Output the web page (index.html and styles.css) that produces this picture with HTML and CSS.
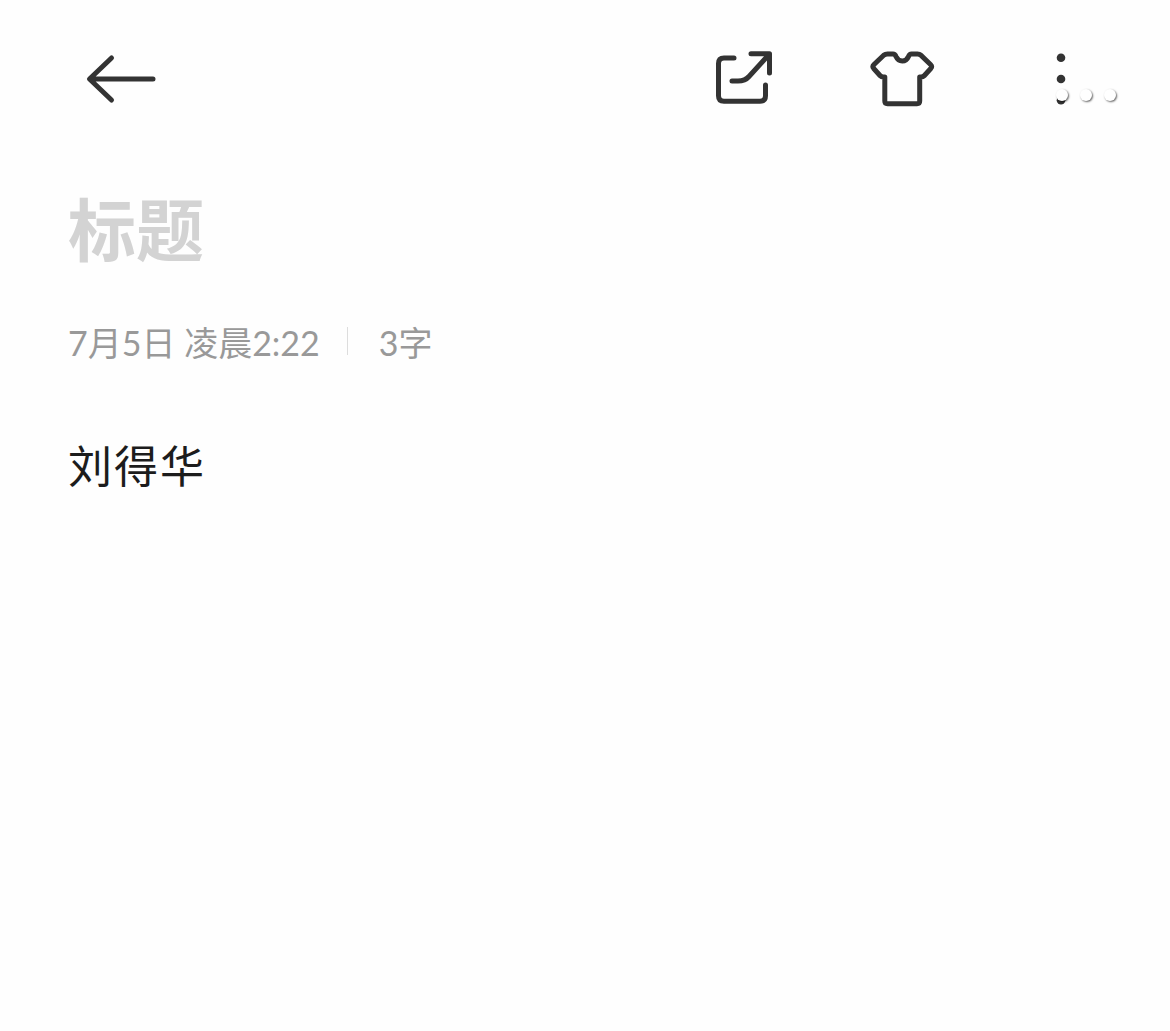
FILE: index.html
```html
<!DOCTYPE html>
<html lang="zh-CN">
<head>
    <meta charset="UTF-8">
    <meta name="viewport" content="width=device-width, initial-scale=1.0">
    <link rel="stylesheet" href="styles.css">

    <title>标题</title>

</head>
<body>

    <header class="toolbar">
        <svg class="icon back" viewBox="0 0 80 80">
            <path d="M73 39H10M31.5 18 9.5 39l22 21"/>
        </svg>
        <svg class="icon share" viewBox="0 0 80 80">
            <path d="M34 18H24q-5.500 0-5.500 5.500v32.300q0 5.500 5.500 5.500h36q5.500 0 5.500-5.500V45"/>
            <path d="M51 13.800h18.500V33M32 41h6c5 0 8-1 11-4.500L69 14.500"/>
        </svg>
        <svg class="icon theme" viewBox="0 0 80 80">
            <path d="M27.500 14H33q2 0 3 2.500Q38 21 42.300 21T48.500 16.500Q49.500 14 51.500 14h6q2 0 3.300 1.200l9.700 9.300q2 2 .3 4l-6.600 7.300q-1.200 1.300-3.200 1.300h-1.300v24q0 2.700-2.700 2.700H27.500q-2.700 0-2.700-2.700v-24h-1.400q-2 0-3.200-1.300l-6.500-7.300q-1.700-2 .3-4l9.700-9.300Q25.200 14 27.500 14z"/>
        </svg>
        <div class="more">
            <svg class="icon" viewBox="0 0 80 80">
                <g class="dots">
                    <circle cx="21" cy="17.700" r="4.300"/>
                    <circle cx="21" cy="39" r="4.300"/>
                    <circle cx="21" cy="60.300" r="4.300"/>
                </g>
            </svg>
            <!-- floating handle over the menu button -->
            <div class="handle">
                <span></span>
                <span></span>
                <span></span>
            </div>
        </div>
    </header>

    <main class="note">
        <h1 class="title">标题</h1>
        <div class="meta">
            <span>7月5日 凌晨2:22</span>
            <span class="divider"></span>
            <span>3字</span>
        </div>
        <p class="content">刘得华</p>
    </main>

</body>
</html>
```

FILE: styles.css
```css
body {
    font-family: Lato, 'Noto Sans CJK SC', sans-serif;
    background-color: #fefefe;
    margin: 0;
}

.toolbar {
    display: flex;
    padding: 40px 30px 0 80px;
}

.icon {
    display: block;
    width: 80px;
    height: 80px;
    fill: none;
    stroke: #333;
    stroke-width: 5;
    stroke-linecap: round;
    stroke-linejoin: round;
}

.share {
    margin-left: auto;
}

.theme {
    margin-left: 80px;
}

.more {
    position: relative;
    width: 100px;
    margin-left: 100px;
}

.dots {
    fill: #333;
    stroke: none;
}

.handle {
    position: absolute;
    left: 16px;
    top: 49px;
    display: flex;
    gap: 12px;
}

.handle span {
    width: 12px;
    height: 12px;
    border-radius: 50%;
    background-color: #fff;
    box-shadow: 1px 1px 2px rgba(0, 0, 0, 0.6);
}

.note {
    padding: 60px 68px 0;
}

.title {
    margin: 0;
    font-size: 68px;
    line-height: 100px;
    color: #d3d3d3;
}

.meta {
    display: flex;
    align-items: center;
    margin-top: 36px;
    height: 50px;
    font-size: 34px;
    color: #999;
}

.divider {
    width: 1px;
    height: 28px;
    margin: 0 31px 0 27px;
    background-color: #ddd;
}

.content {
    margin: 70px 0 0;
    font-size: 44px;
    line-height: 60px;
    letter-spacing: 2px;
    color: #1c1c1c;
}
```
